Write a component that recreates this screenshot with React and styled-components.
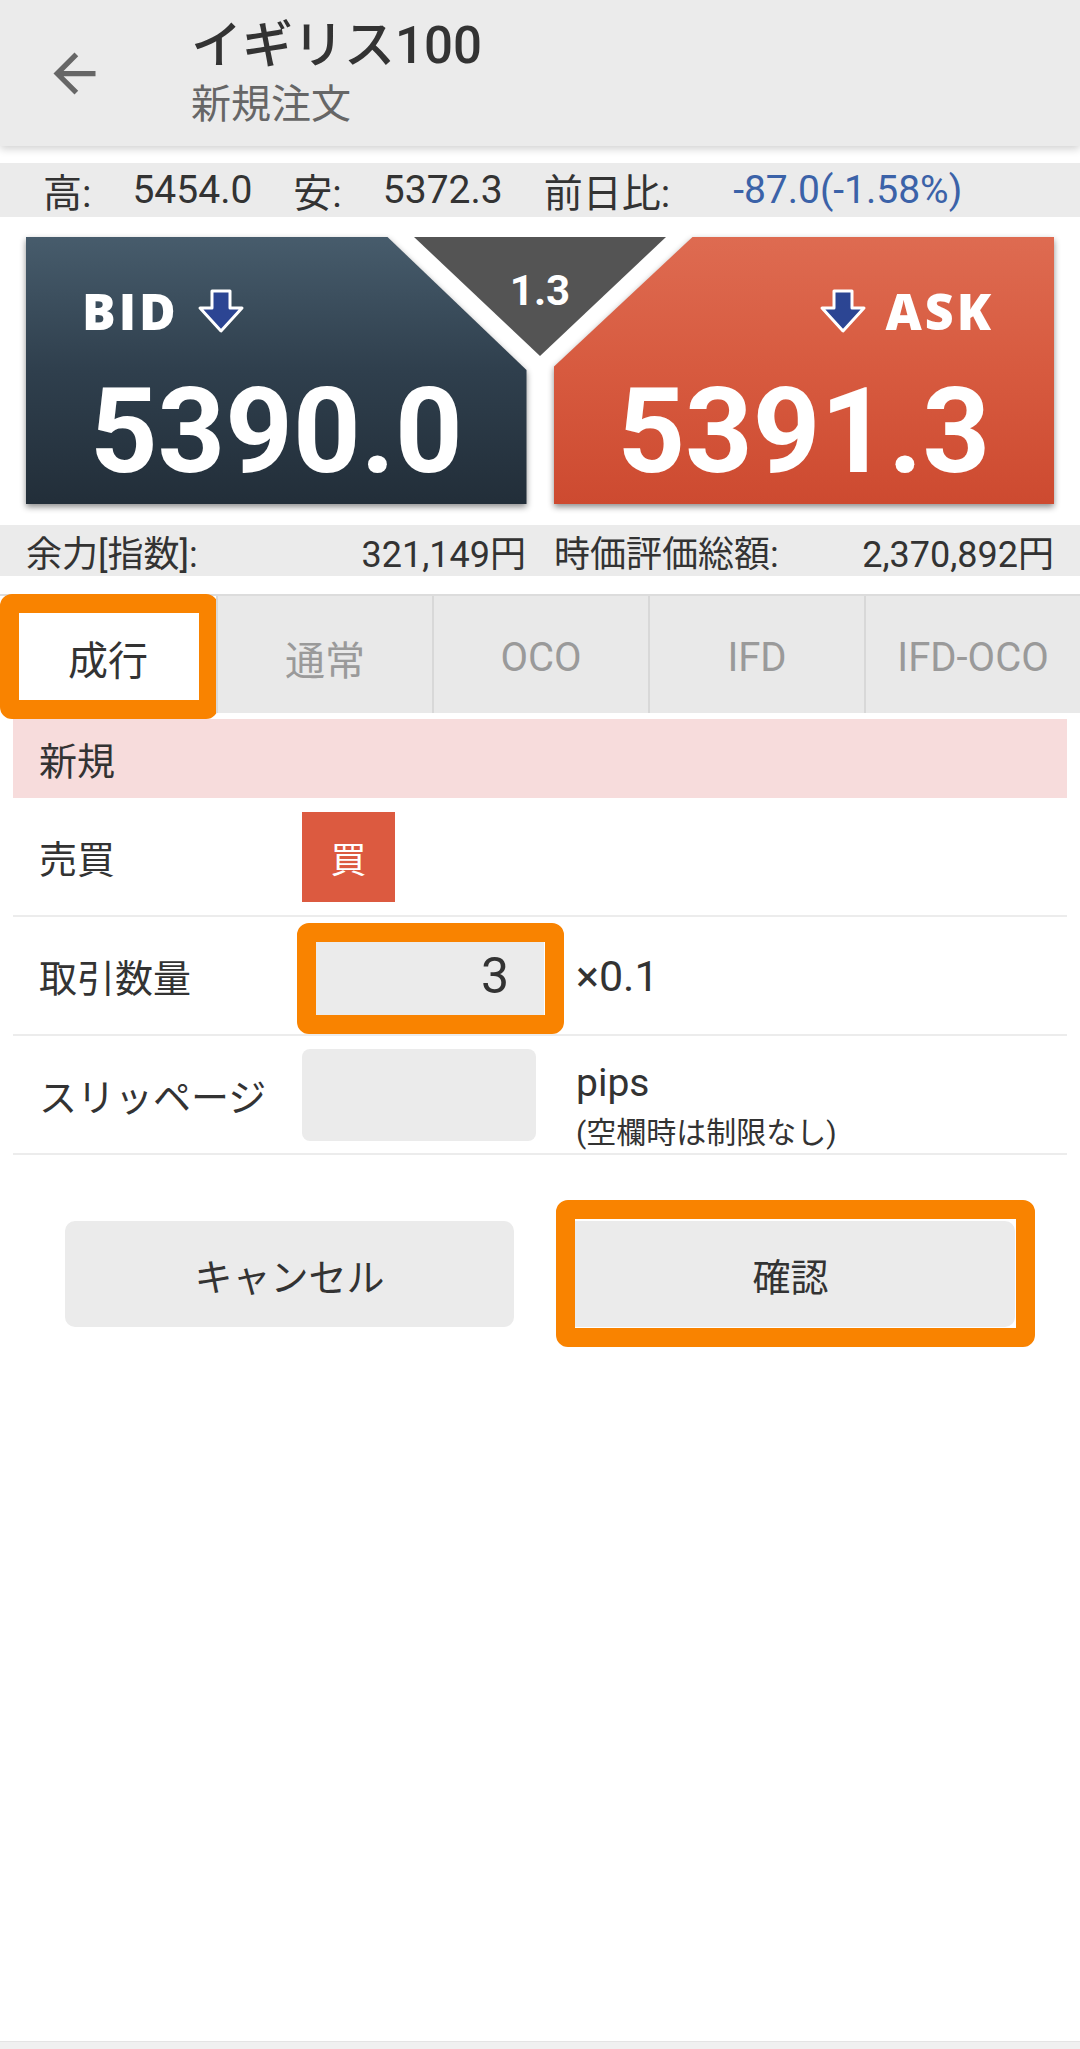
import React from "react";
import styled, { createGlobalStyle } from "styled-components";

const GlobalStyle = createGlobalStyle`
  html, body {
    margin: 0;
    padding: 0;
    background: #fff;
  }
  body {
    font-family: Roboto, "Noto Sans CJK JP", sans-serif;
    color: #333;
  }
  * {
    box-sizing: border-box;
  }
`;

const Page = styled.div`
  min-height: 2049px;
  display: flex;
  flex-direction: column;
`;

const Header = styled.header`
  height: 146px;
  background: #ebebeb;
  box-shadow: 0 3px 8px rgba(0, 0, 0, 0.18);
  display: flex;
  align-items: center;
  position: relative;
  z-index: 1;
`;

const BackButton = styled.button`
  width: 148px;
  height: 146px;
  border: none;
  background: none;
  padding: 0;
  display: flex;
  align-items: center;
  justify-content: center;
  color: #666;
`;

const TitleBlock = styled.div`
  display: flex;
  flex-direction: column;
  padding-left: 43px;
`;

const Title = styled.div`
  font-size: 51px;
  line-height: 58px;
  font-weight: 500;
  color: #333;
`;

const Subtitle = styled.div`
  margin-top: 6px;
  font-size: 40px;
  line-height: 48px;
  color: #666;
`;

const StatsBar = styled.div`
  margin-top: 17px;
  height: 54px;
  background: #ebebeb;
  display: flex;
  align-items: center;
  padding-left: 43px;
  font-size: 39px;
  color: #333;
  gap: 41px;
`;

const StatValue = styled.span`
  color: ${(p) => (p.$accent ? "#3b62a8" : "#333")};
  margin-left: ${(p) => (p.$wide ? "22px" : "0")};
`;

const Quotes = styled.div`
  margin: 20px 26px 0;
  height: 267px;
  display: flex;
  gap: 27px;
  position: relative;
`;

const QuoteShadow = styled.div`
  flex: 1;
  filter: drop-shadow(0 3px 3px rgba(0, 0, 0, 0.45));
`;

const QuotePanel = styled.div`
  height: 100%;
  padding: 49px 0 13px;
  display: flex;
  flex-direction: column;
  align-items: center;
  color: #fff;
  background: ${(p) =>
    p.$side === "bid"
      ? "linear-gradient(180deg, #475c6c 0%, #2f3f4d 50%, #222e39 100%)"
      : "linear-gradient(180deg, #de6b51 0%, #d75a3f 50%, #cd4a30 100%)"};
  clip-path: ${(p) =>
    p.$side === "bid"
      ? "polygon(0 0, calc(100% - 139px) 0, 100% 133px, 100% 100%, 0 100%)"
      : "polygon(139px 0, 100% 0, 100% 100%, 0 100%, 0 130px)"};
`;

const QuoteLabel = styled.div`
  align-self: stretch;
  height: 50px;
  display: flex;
  align-items: center;
  justify-content: ${(p) => (p.$side === "bid" ? "flex-start" : "flex-end")};
  padding: ${(p) => (p.$side === "bid" ? "0 0 0 56px" : "0 60px 0 0")};
  gap: 18px;
  font-family: "Open Sans", sans-serif;
  font-weight: 800;
  font-size: 50px;
  line-height: 1;
  letter-spacing: 3px;
`;

const Price = styled.div`
  margin-top: 37px;
  font-family: Roboto, sans-serif;
  font-weight: 700;
  font-size: 118px;
  line-height: 118px;
  letter-spacing: 0;
`;

const Spread = styled.div`
  position: absolute;
  top: 0;
  left: 50%;
  transform: translateX(-50%);
  width: 252px;
  height: 119px;
  background: #545454;
  clip-path: polygon(0 0, 100% 0, 50% 100%);
  display: flex;
  justify-content: center;
  padding-top: 30px;
  color: #fff;
  font-family: Roboto, sans-serif;
  font-weight: 700;
  font-size: 42px;
  line-height: 48px;
`;

const BalanceBar = styled.div`
  margin-top: 21px;
  height: 51px;
  background: #ebebeb;
  display: grid;
  grid-template-columns: 1fr 1fr;
  column-gap: 28px;
  padding: 0 26px;
  font-size: 36px;
  color: #333;
`;

const BalanceCell = styled.div`
  display: flex;
  align-items: center;
  justify-content: space-between;
`;

const Tabs = styled.div`
  margin-top: 18px;
  height: 119px;
  display: grid;
  grid-template-columns: repeat(5, 1fr);
  background: #e9e9e9;
  border-top: 2px solid #dcdcdc;
`;

const Tab = styled.div`
  position: relative;
  display: flex;
  align-items: center;
  justify-content: center;
  padding-top: 6px;
  font-size: 40px;
  color: ${(p) => (p.$active ? "#333" : "#9a9a9a")};
  background: ${(p) => (p.$active ? "#fff" : "transparent")};
  border-left: ${(p) => (p.$first ? "none" : "2px solid #d8d8d8")};
`;

const Marker = styled.span`
  position: absolute;
  top: ${(p) => p.$t}px;
  right: ${(p) => p.$r}px;
  bottom: ${(p) => p.$b}px;
  left: ${(p) => p.$l}px;
  border: 19px solid #f98300;
  border-radius: 12px;
  pointer-events: none;
`;

const Form = styled.div`
  padding: 6px 13px 0;
`;

const SectionHead = styled.div`
  height: 79px;
  background: #f7dcdc;
  display: flex;
  align-items: center;
  padding-left: 26px;
  font-size: 38px;
  color: #333;
`;

const Row = styled.div`
  height: 119px;
  display: flex;
  align-items: center;
  border-bottom: 2px solid #ececec;
`;

const RowLabel = styled.div`
  width: 289px;
  padding-left: 26px;
  font-size: 38px;
  color: #333;
`;

const BuyBadge = styled.div`
  width: 93px;
  height: 90px;
  background: #dc5a40;
  color: #fff;
  font-size: 36px;
  display: flex;
  align-items: center;
  justify-content: center;
`;

const FieldWrap = styled.div`
  position: relative;
`;

const Field = styled.div`
  width: ${(p) => p.$w}px;
  height: 92px;
  background: #ebebeb;
  border-radius: 8px;
  display: flex;
  align-items: center;
  justify-content: flex-end;
  padding-right: 35px;
  font-size: 50px;
  color: #333;
`;

const Unit = styled.div`
  margin-left: ${(p) => p.$gap}px;
  font-size: 43px;
  color: #333;
`;

const UnitStack = styled.div`
  align-self: flex-start;
  margin-left: 40px;
  padding-top: 24px;
  display: flex;
  flex-direction: column;
`;

const UnitMain = styled.div`
  font-size: 39px;
  line-height: 46px;
  color: #333;
`;

const UnitNote = styled.div`
  font-size: 30px;
  line-height: 54px;
  color: #333;
`;

const Actions = styled.div`
  margin-top: 66px;
  padding: 0 65px;
  display: flex;
  gap: 52px;
`;

const ActionSlot = styled.div`
  position: relative;
  flex: 1;
`;

const ActionButton = styled.button`
  width: 100%;
  height: 106px;
  border: none;
  border-radius: 10px;
  background: #ebebeb;
  font-family: Roboto, "Noto Sans CJK JP", sans-serif;
  font-size: 38px;
  color: #333;
`;

const Spacer = styled.div`
  flex: 1;
`;

const BottomBar = styled.div`
  height: 8px;
  background: #f0f0f0;
  border-top: 1px solid #e4e4e4;
`;

const BackIcon = () => (
  <svg width="63" height="63" viewBox="0 0 24 24" fill="currentColor">
    <path d="M20 11H7.83l5.59-5.59L12 4l-8 8 8 8 1.41-1.41L7.83 13H20v-2z" />
  </svg>
);

const DownArrow = () => (
  <svg width="48" height="48" viewBox="0 0 48 48">
    <polygon
      points="15,4 33,4 33,21 45,21 24,44 3,21 15,21"
      fill="#2c4593"
      stroke="#fff"
      strokeWidth="3"
      strokeLinejoin="round"
    />
  </svg>
);

const tabs = ["成行", "通常", "OCO", "IFD", "IFD-OCO"];

export default function App() {
  return (
    <Page>
      <GlobalStyle />
      <Header>
        <BackButton>
          <BackIcon />
        </BackButton>
        <TitleBlock>
          <Title>イギリス100</Title>
          <Subtitle>新規注文</Subtitle>
        </TitleBlock>
      </Header>

      <StatsBar>
        <span>高:</span>
        <StatValue>5454.0</StatValue>
        <span>安:</span>
        <StatValue>5372.3</StatValue>
        <span>前日比:</span>
        <StatValue $accent $wide>
          -87.0(-1.58%)
        </StatValue>
      </StatsBar>

      <Quotes>
        <QuoteShadow>
          <QuotePanel $side="bid">
            <QuoteLabel $side="bid">
              BID
              <DownArrow />
            </QuoteLabel>
            <Price>5390.0</Price>
          </QuotePanel>
        </QuoteShadow>
        <QuoteShadow>
          <QuotePanel $side="ask">
            <QuoteLabel $side="ask">
              <DownArrow />
              ASK
            </QuoteLabel>
            <Price>5391.3</Price>
          </QuotePanel>
        </QuoteShadow>
        <Spread>1.3</Spread>
      </Quotes>

      <BalanceBar>
        <BalanceCell>
          <span>余力[指数]:</span>
          <span>321,149円</span>
        </BalanceCell>
        <BalanceCell>
          <span>時価評価総額:</span>
          <span>2,370,892円</span>
        </BalanceCell>
      </BalanceBar>

      <Tabs>
        {tabs.map((t, i) => (
          <Tab key={t} $active={i === 0} $first={i === 0}>
            {t}
            {i === 0 && <Marker $t={-2} $r={-2} $b={-6} $l={0} />}
          </Tab>
        ))}
      </Tabs>

      <Form>
        <SectionHead>新規</SectionHead>
        <Row>
          <RowLabel>売買</RowLabel>
          <BuyBadge>買</BuyBadge>
        </Row>
        <Row>
          <RowLabel>取引数量</RowLabel>
          <FieldWrap>
            <Field $w={242}>3</Field>
            <Marker $t={-7} $r={-20} $b={-12} $l={-5} />
          </FieldWrap>
          <Unit $gap={32}>×0.1</Unit>
        </Row>
        <Row>
          <RowLabel>スリッページ</RowLabel>
          <Field $w={234} />
          <UnitStack>
            <UnitMain>pips</UnitMain>
            <UnitNote>(空欄時は制限なし)</UnitNote>
          </UnitStack>
        </Row>
      </Form>

      <Actions>
        <ActionSlot>
          <ActionButton>キャンセル</ActionButton>
        </ActionSlot>
        <ActionSlot>
          <ActionButton>確認</ActionButton>
          <Marker $t={-21} $r={-20} $b={-20} $l={-10} />
        </ActionSlot>
      </Actions>

      <Spacer />
      <BottomBar />
    </Page>
  );
}
